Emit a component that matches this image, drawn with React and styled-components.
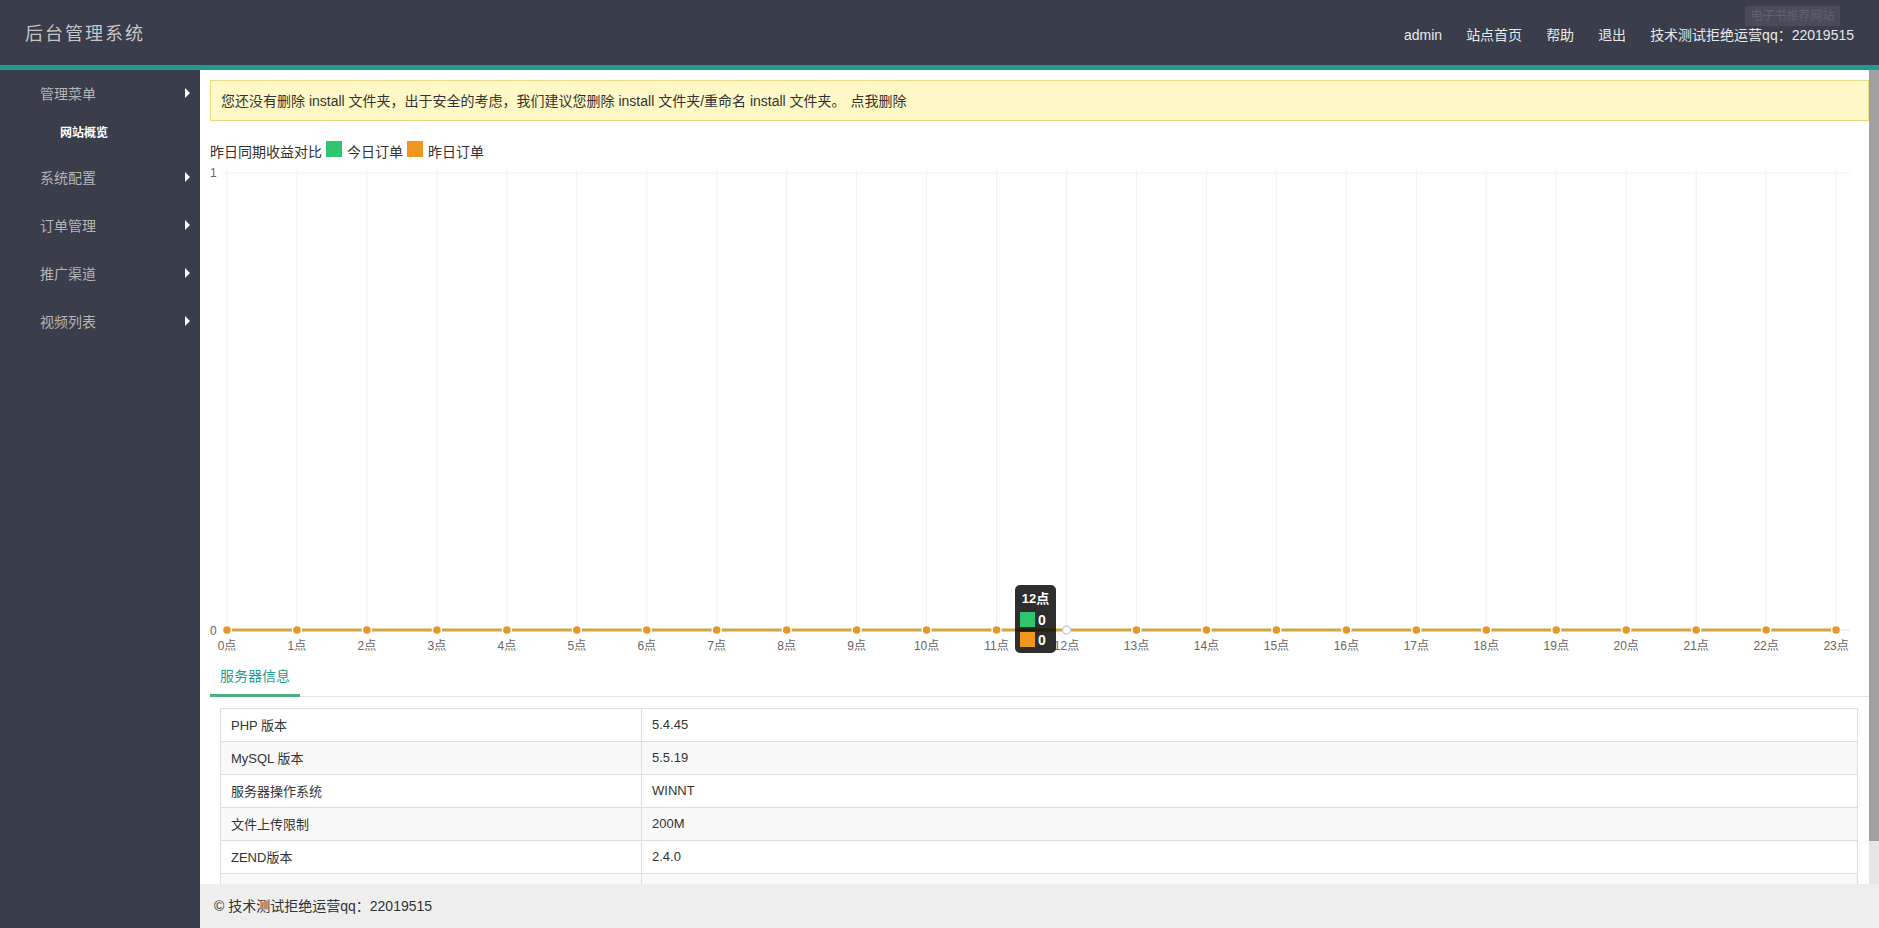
import React from 'react';
import styled, { createGlobalStyle } from 'styled-components';

const GlobalStyle = createGlobalStyle`
  html, body, #root {
    margin: 0;
    height: 100%;
  }
  body {
    font-family: "Liberation Sans", "Noto Sans CJK SC", sans-serif;
    font-size: 14px;
    color: #333;
    overflow: hidden;
  }
`;

const Page = styled.div`
  height: 928px;
  display: flex;
  flex-direction: column;
`;

const Header = styled.header`
  position: relative;
  flex: none;
  height: 65px;
  display: flex;
  align-items: center;
  justify-content: space-between;
  padding: 0 25px;
  background: #3a3d4a;
  border-bottom: 5px solid #1f9c8f;
`;

const Logo = styled.div`
  color: #c6c6c6;
  font-size: 18px;
  letter-spacing: 2px;
  margin-top: -2px;
`;

const Nav = styled.nav`
  display: flex;
  align-items: baseline;
  gap: 24px;
  margin-top: 3px;
`;

const NavLink = styled.a`
  color: #e8e8e8;
  font-size: 14px;
`;

const HeaderTip = styled.div`
  position: absolute;
  left: 1745px;
  top: 6px;
  width: 95px;
  height: 20px;
  line-height: 20px;
  text-align: center;
  font-size: 12px;
  color: #5f626d;
  background: #494c58;
`;

const Body = styled.div`
  flex: 1;
  min-height: 0;
  display: flex;
`;

const Sidebar = styled.aside`
  flex: none;
  width: 200px;
  background: #3a3d4a;
`;

const MenuItem = styled.div`
  height: 48px;
  box-sizing: border-box;
  padding: 0 10px 2px 40px;
  display: flex;
  align-items: center;
  justify-content: space-between;
  color: #b4b4b4;
  font-size: 14px;
`;

const Arrow = styled.span`
  width: 0;
  height: 0;
  border-left: 5px solid #fff;
  border-top: 5px solid transparent;
  border-bottom: 5px solid transparent;
`;

const SubItem = styled.div`
  height: 28px;
  margin-bottom: 8px;
  line-height: 30px;
  padding-left: 60px;
  color: #fff;
  font-size: 12px;
  font-weight: bold;
`;

const Main = styled.div`
  flex: 1;
  min-width: 0;
  display: flex;
  flex-direction: column;
`;

const Viewport = styled.div`
  flex: 1;
  min-height: 0;
  display: flex;
`;

const Content = styled.main`
  flex: 1;
  min-width: 0;
  overflow: hidden;
  background: #fff;
`;

const ScrollTrack = styled.div`
  flex: none;
  width: 10px;
  background: #e6e6e6;
`;

const ScrollThumb = styled.div`
  height: 771px;
  background: #a0a0a0;
`;

const Alert = styled.div`
  margin: 10px 0 0 10px;
  height: 41px;
  box-sizing: border-box;
  padding: 0 10px 2px;
  display: flex;
  align-items: center;
  gap: 5px;
  background: #fef8c6;
  border: 1px solid #e8d987;
  font-size: 14px;
  color: #333;
`;

const Legend = styled.div`
  margin: 20px 0 0 10px;
  height: 20px;
  display: flex;
  align-items: center;
  font-size: 14px;
  color: #333;
`;

const Swatch = styled.span`
  flex: none;
  width: 16px;
  height: 16px;
  margin: -5px 5px 0 4px;
  background: ${({ $color }) => $color};
`;

const ChartWrap = styled.div`
  position: relative;
  height: 495px;
  margin-top: 4px;
`;

const ChartSvg = styled.svg`
  display: block;
`;

const Tooltip = styled.div`
  position: absolute;
  left: 815px;
  top: 420px;
  width: 41px;
  height: 68px;
  box-sizing: border-box;
  padding: 5px 5px 0;
  border-radius: 5px;
  background: rgba(0, 0, 0, 0.82);
  color: #fff;
  font-weight: bold;
  font-size: 13px;
`;

const TooltipTitle = styled.div`
  height: 17px;
  line-height: 17px;
  text-align: center;
  margin-bottom: 5px;
`;

const TooltipRow = styled.div`
  display: flex;
  align-items: center;
  gap: 3px;
  height: 15px;
  margin-bottom: 5px;
  font-size: 14px;
`;

const TooltipSwatch = styled.span`
  width: 15px;
  height: 15px;
  background: ${({ $color }) => $color};
`;

const Tabs = styled.div`
  margin-left: 10px;
  height: 36px;
  border-bottom: 1px solid #e2e2e2;
  display: flex;
`;

const Tab = styled.div`
  height: 37px;
  box-sizing: border-box;
  padding: 0 10px;
  line-height: 32px;
  color: #1f9c8f;
  font-size: 14px;
  border-bottom: 3px solid #4fae84;
`;

const InfoTable = styled.table`
  width: calc(100% - 31px);
  margin: 11px 0 23px 20px;
  border-collapse: collapse;
  table-layout: fixed;
  font-size: 13px;
`;

const Row = styled.tr`
  height: 33px;
  &:nth-child(even) {
    background: #f9f9f9;
  }
`;

const Cell = styled.td`
  box-sizing: border-box;
  padding: 0 10px 2px;
  border: 1px solid #ddd;
  color: #333;
  &:first-child {
    width: 421px;
  }
`;

const Footer = styled.footer`
  flex: none;
  height: 44px;
  line-height: 44px;
  padding-left: 14px;
  background: #eee;
  font-size: 14px;
  color: #333;
`;

const menus = ['系统配置', '订单管理', '推广渠道', '视频列表'];

const serverInfo = [
    ['PHP 版本', '5.4.45'],
    ['MySQL 版本', '5.5.19'],
    ['服务器操作系统', 'WINNT'],
    ['文件上传限制', '200M'],
    ['ZEND版本', '2.4.0'],
    ['Web 服务器', 'Apache/2.4.23'],
];

// chart coordinates are relative to the chart wrapper
const X0 = 27;
const STEP = 69.96;
const Y_TOP = 8;
const Y_ZERO = 465;
const hours = Array.from({ length: 24 }, (_, i) => i);
const xOf = (h) => X0 + h * STEP;

const Chart = () => (
    <ChartSvg width="1669" height="495" xmlns="http://www.w3.org/2000/svg">
        {hours.map((h) => (
            <line key={h} x1={xOf(h)} x2={xOf(h)} y1={Y_TOP - 3} y2={Y_ZERO + 5} stroke="#f0f0f0" />
        ))}
        <line x1={X0 - 5} x2={1650} y1={Y_TOP} y2={Y_TOP} stroke="#f0f0f0" />
        <line x1={X0 - 5} x2={1650} y1={Y_ZERO} y2={Y_ZERO} stroke="#e4e4e4" />
        <text x="10" y={Y_TOP + 4} fontSize="12" fill="#666">1</text>
        <text x="10" y={Y_ZERO + 5} fontSize="12" fill="#666">0</text>
        <line x1={X0} x2={xOf(23)} y1={Y_ZERO} y2={Y_ZERO} stroke="#d4a441" strokeWidth="3" />
        {hours.map((h) =>
            h === 12 ? (
                <circle key={h} cx={xOf(h)} cy={Y_ZERO} r="4" fill="#fff" stroke="#c5cdd8" strokeWidth="1.5" />
            ) : (
                <circle key={h} cx={xOf(h)} cy={Y_ZERO} r="4.5" fill="#e8962a" stroke="#fff" strokeWidth="1.5" />
            )
        )}
        {hours.map((h) => (
            <text key={h} x={xOf(h)} y={Y_ZERO + 20} fontSize="12" fill="#666" textAnchor="middle">
                {h}点
            </text>
        ))}
    </ChartSvg>
);

const App = () => {
    return (
        <Page>
            <GlobalStyle />
            <Header>
                <Logo>后台管理系统</Logo>
                <Nav>
                    <NavLink>admin</NavLink>
                    <NavLink>站点首页</NavLink>
                    <NavLink>帮助</NavLink>
                    <NavLink>退出</NavLink>
                    <NavLink>技术测试拒绝运营qq：22019515</NavLink>
                </Nav>
                <HeaderTip>电子书推荐网站</HeaderTip>
            </Header>
            <Body>
                <Sidebar>
                    <MenuItem>管理菜单<Arrow /></MenuItem>
                    <SubItem>网站概览</SubItem>
                    {menus.map((name) => (
                        <MenuItem key={name}>{name}<Arrow /></MenuItem>
                    ))}
                </Sidebar>
                <Main>
                    <Viewport>
                        <Content>
                            <Alert>
                                <span>您还没有删除 install 文件夹，出于安全的考虑，我们建议您删除 install 文件夹/重命名 install 文件夹。</span>
                                <span>点我删除</span>
                            </Alert>
                            <Legend>
                                昨日同期收益对比
                                <Swatch $color="#2fc46e" />
                                今日订单
                                <Swatch $color="#f0961f" />
                                昨日订单
                            </Legend>
                            <ChartWrap>
                                <Chart />
                                <Tooltip>
                                    <TooltipTitle>12点</TooltipTitle>
                                    <TooltipRow><TooltipSwatch $color="#2fc46e" />0</TooltipRow>
                                    <TooltipRow><TooltipSwatch $color="#f0961f" />0</TooltipRow>
                                </Tooltip>
                            </ChartWrap>
                            <Tabs>
                                <Tab>服务器信息</Tab>
                            </Tabs>
                            <InfoTable>
                                <tbody>
                                    {serverInfo.map(([label, value]) => (
                                        <Row key={label}>
                                            <Cell>{label}</Cell>
                                            <Cell>{value}</Cell>
                                        </Row>
                                    ))}
                                </tbody>
                            </InfoTable>
                        </Content>
                        <ScrollTrack>
                            <ScrollThumb />
                        </ScrollTrack>
                    </Viewport>
                    <Footer>© 技术测试拒绝运营qq：22019515</Footer>
                </Main>
            </Body>
        </Page>
    );
};

export default App;
